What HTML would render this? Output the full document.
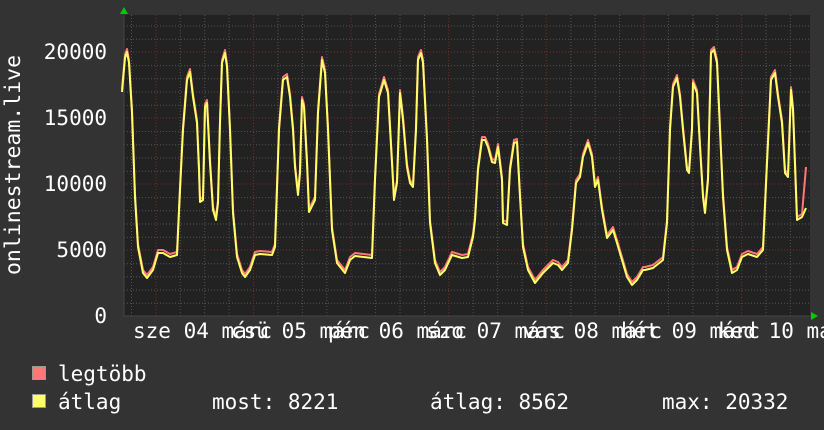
<!DOCTYPE html>
<html><head><meta charset="utf-8"><style>
body{margin:0;background:#333;width:824px;height:430px;overflow:hidden;position:relative;font-family:"DejaVu Sans Mono","Liberation Mono",monospace;color:#fff}
.t{position:absolute;font-size:21px;white-space:pre;line-height:1}
</style></head><body>
<svg width="824" height="430" style="position:absolute;left:0;top:0">
<rect x="124" y="15" width="686" height="301" fill="#222"/>
<g stroke="#555" stroke-width="1" stroke-dasharray="1,2">
<path d="M124 303.3H810M124 290.1H810M124 276.9H810M124 263.7H810M124 237.2H810M124 224H810M124 210.8H810M124 197.6H810M124 171.2H810M124 158H810M124 144.8H810M124 131.6H810M124 105.2H810M124 92H810M124 78.8H810M124 65.6H810M124 39.2H810M124 26H810"/>
<path d="M131.5 15V316M180.3 15V316M204.7 15V316M229.1 15V316M278 15V316M302.4 15V316M326.8 15V316M375.6 15V316M400 15V316M424.4 15V316M473.2 15V316M497.6 15V316M522 15V316M570.8 15V316M595.2 15V316M619.6 15V316M668.4 15V316M692.8 15V316M717.2 15V316M766 15V316M790.4 15V316"/>
</g>
<g stroke="#7a2a2a" stroke-width="1" stroke-dasharray="1,2">
<path d="M124 52H810M124 118H810M124 184H810M124 250H810"/>
<path d="M155.9 15V316M253.5 15V316M351.1 15V316M448.7 15V316M546.3 15V316M643.9 15V316M741.5 15V316"/>
</g>
<path d="M124 316H812" stroke="#444" stroke-width="1"/>
<path d="M124 15V316" stroke="#444" stroke-width="1"/>
<polygon points="120,14 128,14 124,7" fill="#0c0"/>
<polygon points="811,312 811,320 818,316" fill="#0c0"/>
<g fill="none" stroke-linejoin="round">
<polyline transform="translate(0,-3)" stroke="#f77" stroke-width="2" points="122,92 125,58 127,52 129,63 132,113 135,197 138,247 143,273 147,278 153,270 158,253 163,253 170,257 177,255 180,190 183,130 187,80 190,72 193,97 197,123 199,170 200,202 203,200 205,107 207,103 210,163 213,210 216,220 218,203 220,123 222,63 225,53 227,67 230,130 233,213 237,257 242,273 245,277 250,270 255,255 260,254 272,255 275,247 279,130 283,80 287,77 290,97 293,130 295,167 298,195 300,173 302,100 304,107 307,163 309,212 315,200 318,113 322,60 325,73 328,130 332,230 337,263 345,273 350,260 355,256 372,258 375,180 379,97 382,87 384,80 388,93 392,163 394,200 397,183 400,93 403,120 407,167 410,183 413,187 416,130 418,60 421,53 423,63 427,140 430,223 435,263 440,275 445,270 452,255 462,258 468,257 473,237 475,220 478,170 482,140 485,140 488,147 492,162 495,163 498,147 502,180 503,223 507,225 510,170 514,143 517,142 520,197 523,247 528,270 535,283 543,273 553,263 558,265 562,270 568,263 572,230 576,183 580,177 583,157 588,143 592,157 595,187 598,180 602,210 607,238 613,230 617,243 622,260 627,277 632,285 637,280 643,270 645,270 653,268 663,260 667,223 670,130 673,87 677,78 680,97 683,130 687,170 689,173 692,130 693,83 697,93 700,147 703,197 705,213 708,180 711,53 714,50 717,63 720,130 723,197 727,250 732,273 737,270 742,257 748,254 757,257 763,250 767,163 771,80 775,73 778,97 782,123 785,173 788,177 791,90 793,110 797,220 802,217 806,170"/>
<polyline stroke="#ff6" stroke-width="2" points="122,92 125,58 127,52 129,63 132,113 135,197 138,247 143,273 147,278 153,270 158,253 163,253 170,257 177,255 180,190 183,130 187,80 190,72 193,97 197,123 199,170 200,202 203,200 205,107 207,103 210,163 213,210 216,220 218,203 220,123 222,63 225,53 227,67 230,130 233,213 237,257 242,273 245,277 250,270 255,255 260,254 272,255 275,247 279,130 283,80 287,77 290,97 293,130 295,167 298,195 300,173 302,100 304,107 307,163 309,212 315,200 318,113 322,60 325,73 328,130 332,230 337,263 345,273 350,260 355,256 372,258 375,180 379,97 382,87 384,80 388,93 392,163 394,200 397,183 400,93 403,120 407,167 410,183 413,187 416,130 418,60 421,53 423,63 427,140 430,223 435,263 440,275 445,270 452,255 462,258 468,257 473,237 475,220 478,170 482,140 485,140 488,147 492,162 495,163 498,147 502,180 503,223 507,225 510,170 514,143 517,142 520,197 523,247 528,270 535,283 543,273 553,263 558,265 562,270 568,263 572,230 576,183 580,177 583,157 588,143 592,157 595,187 598,180 602,210 607,238 613,230 617,243 622,260 627,277 632,285 637,280 643,270 645,270 653,268 663,260 667,223 670,130 673,87 677,78 680,97 683,130 687,170 689,173 692,130 693,83 697,93 700,147 703,197 705,213 708,180 711,53 714,50 717,63 720,130 723,197 727,250 732,273 737,270 742,257 748,254 757,257 763,250 767,163 771,80 775,73 778,97 782,123 785,173 788,177 791,90 793,110 797,220 802,217 806,208"/>
</g>
<rect x="32.5" y="366.5" width="13" height="13" fill="#f77" stroke="#999"/>
<rect x="32.5" y="394.5" width="13" height="13" fill="#ff6" stroke="#999"/>
<text x="20" y="165" transform="rotate(-90 20 165)" text-anchor="middle" font-family="DejaVu Sans Mono, monospace" font-size="21.5" fill="#fff">onlinestream.live</text>
</svg>
<div class="t" style="right:717px;top:42px">20000</div>
<div class="t" style="right:717px;top:108px">15000</div>
<div class="t" style="right:717px;top:174px">10000</div>
<div class="t" style="right:717px;top:240px">5000</div>
<div class="t" style="right:717px;top:306px">0</div>
<div class="t" style="left:133px;top:321px">sze 04 márc</div>
<div class="t" style="left:231px;top:321px">csü 05 márc</div>
<div class="t" style="left:328px;top:321px">pén 06 márc</div>
<div class="t" style="left:426px;top:321px">szo 07 márc</div>
<div class="t" style="left:523px;top:321px">vas 08 márc</div>
<div class="t" style="left:621px;top:321px">hét 09 márc</div>
<div class="t" style="left:718px;top:321px">ked 10 márc</div>
<div class="t" style="left:58px;top:364px">legtöbb</div>
<div class="t" style="left:58px;top:392px">átlag</div>
<div class="t" style="left:212px;top:392px">most: 8221</div>
<div class="t" style="left:430px;top:392px">átlag: 8562</div>
<div class="t" style="left:662px;top:392px">max: 20332</div>
</body></html>
